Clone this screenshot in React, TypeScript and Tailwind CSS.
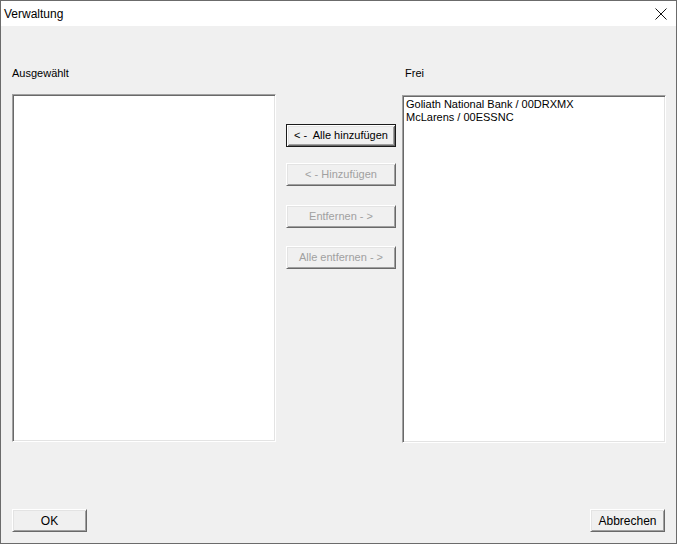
import clsx from "clsx";

const font = { fontFamily: '"Liberation Sans", Arial, sans-serif' };

function Button({
  label,
  disabled,
  primary,
  className,
}: {
  label: string;
  disabled?: boolean;
  primary?: boolean;
  className?: string;
}) {
  return (
    <button
      type="button"
      disabled={disabled}
      className={clsx(
        "flex items-center justify-center whitespace-pre bg-[#f0f0f0] text-[11px] leading-none",
        primary
          ? "border border-[#1a1a1a] shadow-[inset_1px_1px_#ffffff,inset_-1px_-1px_#696969,inset_2px_2px_#e3e3e3,inset_-2px_-2px_#a0a0a0]"
          : "border border-t-white border-l-white border-b-[#696969] border-r-[#696969] shadow-[inset_1px_1px_#e3e3e3,inset_-1px_-1px_#a0a0a0]",
        disabled ? "text-[#a0a0a0]" : "text-black",
        className,
      )}
    >
      {label}
    </button>
  );
}

function ListBox({ items, className }: { items: string[]; className?: string }) {
  return (
    <div
      className={clsx(
        "h-[348px] w-[264px] border border-t-[#a0a0a0] border-l-[#a0a0a0] border-b-white border-r-white bg-white px-[2px] pt-[2px] shadow-[inset_1px_1px_#696969,inset_-1px_-1px_#e3e3e3]",
        className,
      )}
    >
      {items.map((item) => (
        <div key={item} className="pl-[1px] text-[11px] leading-[13px] text-black">
          {item}
        </div>
      ))}
    </div>
  );
}

export default function App() {
  return (
    <div
      style={font}
      className="flex h-[544px] w-[677px] flex-col border border-[#6b6b6b] bg-[#f0f0f0]"
    >
      <div className="flex h-[25px] shrink-0 items-center justify-between bg-white pl-[3px] pr-[9px]">
        <span className="text-[12px] text-black">Verwaltung</span>
        <svg width="12" height="12" viewBox="0 0 12 12" className="mt-[1px]">
          <path d="M0.5 0.5 L11.5 11.5 M11.5 0.5 L0.5 11.5" stroke="#111" strokeWidth="1" fill="none" />
        </svg>
      </div>

      <div className="flex flex-1 flex-col px-[11px] pb-[11px] pt-[41px]">
        <div className="flex">
          <div className="flex flex-col">
            <span className="h-[13px] text-[11px] leading-[13px] text-black">Ausgewählt</span>
            <ListBox items={[]} className="mt-[14px]" />
          </div>

          <div className="ml-[10px] flex w-[110px] flex-col pt-[57px]">
            <Button label="< -  Alle hinzufügen" primary className="h-[23px] w-[110px]" />
            <Button label="< - Hinzufügen" disabled className="mt-[16px] h-[23px] w-[110px]" />
            <Button label="Entfernen - >" disabled className="mt-[19px] h-[23px] w-[110px]" />
            <Button label="Alle entfernen - >" disabled className="mt-[18px] h-[23px] w-[110px]" />
          </div>

          <div className="ml-[6px] flex flex-col">
            <span className="h-[13px] pl-[3px] text-[11px] leading-[13px] text-black">Frei</span>
            <ListBox
              items={["Goliath National Bank / 00DRXMX", "McLarens / 00ESSNC"]}
              className="mt-[15px]"
            />
          </div>
        </div>

        <div className="mt-auto flex justify-between">
          <Button label="OK" className="h-[23px] w-[75px] text-[12px]" />
          <Button label="Abbrechen" className="h-[23px] w-[75px] text-[12px]" />
        </div>
      </div>
    </div>
  );
}
